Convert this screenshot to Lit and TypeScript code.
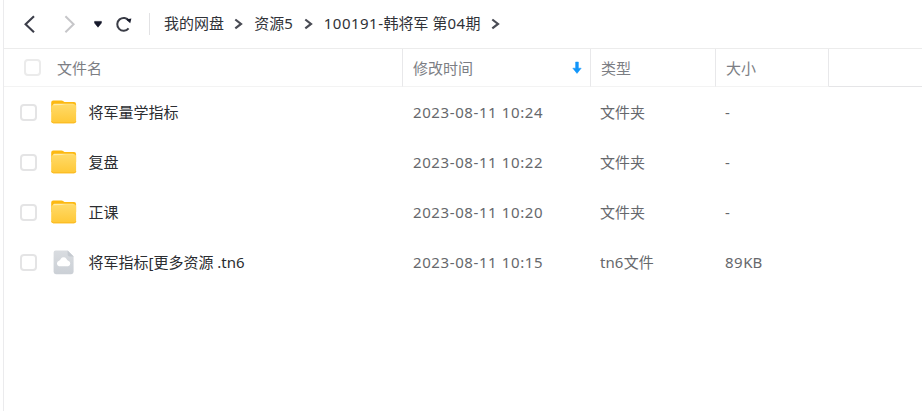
import { LitElement, html, css } from "lit";
import { customElement, property } from "lit/decorators.js";

interface Entry {
  name: string;
  date: string;
  type: string;
  size: string;
  icon: "folder" | "file";
}

const ENTRIES: Entry[] = [
  { name: "将军量学指标", date: "2023-08-11 10:24", type: "文件夹", size: "-", icon: "folder" },
  { name: "复盘", date: "2023-08-11 10:22", type: "文件夹", size: "-", icon: "folder" },
  { name: "正课", date: "2023-08-11 10:20", type: "文件夹", size: "-", icon: "folder" },
  { name: "将军指标[更多资源 .tn6", date: "2023-08-11 10:15", type: "tn6文件", size: "89KB", icon: "file" },
];

const CRUMBS = ["我的网盘", "资源5", "100191-韩将军 第04期"];

// Runs with digits get slightly wider tracking than the Chinese text.
const label = (text: string) =>
  text
    .split(/([0-9][0-9:\- ]*)/)
    .filter(Boolean)
    .map((part) => (/^[0-9]/.test(part) ? html`<span class="num">${part}</span>` : part));

const runStyles = css`
  .num { letter-spacing: 0.5px; }
`;

const folderIcon = html`<svg width="26" height="24" viewBox="0 0 26 24">
  <defs>
    <linearGradient id="front" x1="0" y1="0" x2="0" y2="1">
      <stop offset="0" stop-color="#ffda68" />
      <stop offset="1" stop-color="#ffc836" />
    </linearGradient>
  </defs>
  <path d="M0.2 2.6Q0.2 0.6 2.2 0.6H10.4Q11.6 0.6 12.4 1.3L13.5 2H23Q25.1 2 25.1 4.2V12H0.2Z" fill="#fcb912" />
  <path d="M1.8 5.4Q2 3.8 3.4 3.8H22Q23.5 3.8 23.6 5.4V9H1.8Z" fill="#ffecaa" />
  <path d="M0.2 7.2Q0.2 5.6 1.7 5.3L10.6 5.1Q11.8 5 13 4.6Q14 4.3 15 4.3H23Q25.1 4.3 25.1 6.2V21.2Q25.1 23.3 23 23.3H2.3Q0.2 23.3 0.2 21.2Z" fill="url(#front)" />
  <path d="M0.6 21.2Q1 22.8 2.4 22.8H23Q24.6 22.8 24.9 21.2" fill="none" stroke="#fbb81c" stroke-width="0.9" />
</svg>`;

const fileIcon = html`<svg width="22" height="25" viewBox="0 0 22 25">
  <defs>
    <linearGradient id="sheet" x1="0" y1="0" x2="0" y2="1">
      <stop offset="0" stop-color="#d9dce0" />
      <stop offset="1" stop-color="#cbd0d6" />
    </linearGradient>
  </defs>
  <path d="M2.6 0.5H14.6L20.6 6.5V21.8Q20.6 24.2 18.2 24.2H3Q0.6 24.2 0.6 21.8V2.7Q0.6 0.5 2.6 0.5Z" fill="url(#sheet)" />
  <path d="M14.6 0.5L20.6 6.5H16.6Q14.6 6.5 14.6 4.7Z" fill="#c5cad0" />
  <path d="M6 16.2A2.8 2.8 0 0 1 6 10.8Q7.2 10.2 7.8 8.8A3.4 3.4 0 0 1 13.4 8.8Q14 10.2 15.2 10.8A2.8 2.8 0 0 1 15.2 16.2Z" fill="#fff" />
</svg>`;

@customElement("nav-bar")
export class NavBar extends LitElement {
  static styles = [
    runStyles,
    css`
      :host { display: flex; align-items: center; height: 48px; border-bottom: 1px solid #ececec; color: #303238; }
      svg { display: block; flex: none; }
      .back { margin-left: 19px; }
      .next { margin-left: 27px; }
      .drop { margin-left: 17px; }
      .reload { margin-left: 12px; }
      .rule { width: 1px; height: 22px; margin: 0 14px 0 16px; background: #e2e2e4; }
      .crumb { white-space: pre; line-height: 22px; padding-bottom: 2px; }
      .sep { margin: 0 11px 0 10.3px; }
    `,
  ];

  render() {
    return html`
      <svg class="back" width="13" height="20" viewBox="0 0 13 20"><path d="M11 2.2L2.6 10.2L11 18.2" fill="none" stroke="#3b3d49" stroke-width="2.1" /></svg>
      <svg class="next" width="13" height="20" viewBox="0 0 13 20"><path d="M2.4 2.2L10.6 10.2L2.4 18.2" fill="none" stroke="#c6c6c9" stroke-width="2" /></svg>
      <svg class="drop" width="10" height="8" viewBox="0 0 10 8"><path d="M1.6 1.4H8.4V3L5 7.2L1.6 3Z" fill="#15182a" stroke="#15182a" stroke-width="0.6" stroke-linejoin="round" /></svg>
      <svg class="reload" width="18" height="18" viewBox="0 0 18 18">
        <path d="M13.6 13.4A6.4 6.4 0 1 1 14 5.8" fill="none" stroke="#3b3d47" stroke-width="2" />
        <path d="M11 4.6L16.4 3.6L15.2 8.2Z" fill="#15182a" />
      </svg>
      <div class="rule"></div>
      ${CRUMBS.map(
        (c) => html`<span class="crumb">${label(c)}</span>
          <svg class="sep" width="9" height="12" viewBox="0 0 9 12"><path d="M1.3 1.5L7 5.9L1.3 10.3" fill="none" stroke="#4a4c55" stroke-width="2.2" /></svg>`
      )}
    `;
  }
}

@customElement("file-row")
export class FileRow extends LitElement {
  @property({ attribute: false }) entry!: Entry;

  static styles = [
    runStyles,
    css`
      :host { display: grid; grid-template-columns: 399px 188px 125px 113px; align-items: center; height: 50px; white-space: pre; color: #66686c; }
      .name { display: flex; align-items: center; padding-left: 16px; color: #2b2d31; }
      .box { box-sizing: border-box; width: 17px; height: 17px; border: 2px solid #e4e4e5; border-radius: 4px; flex: none; }
      .icon { display: flex; justify-content: center; width: 26px; margin: 0 11.5px 0 14px; }
      .cell { padding-left: 10px; }
      .type, .size { padding-left: 9px; }
      .date .num { letter-spacing: 0.6px; }
    `,
  ];

  render() {
    const e = this.entry;
    return html`
      <div class="name">
        <span class="box"></span>
        <span class="icon">${e.icon === "folder" ? folderIcon : fileIcon}</span>
        <span>${label(e.name)}</span>
      </div>
      <div class="cell date">${label(e.date)}</div>
      <div class="cell type">${label(e.type)}</div>
      <div class="cell size">${label(e.size)}</div>
    `;
  }
}

@customElement("app-root")
export class AppRoot extends LitElement {
  static styles = css`
    :host {
      display: block;
      box-sizing: border-box;
      height: 411px;
      margin-left: 3px;
      border-left: 1px solid #ebebed;
      overflow: hidden;
      background: #fff;
      font: 15px/24px "Noto Sans", "Noto Sans CJK SC", sans-serif;
    }
    .head { display: grid; grid-template-columns: 399px 188px 125px 113px 1fr; height: 38px; color: #7c7e84; }
    .head > div { display: flex; align-items: center; box-sizing: border-box; padding-left: 10px; border-right: 1px solid #e8e8ea; border-bottom: 1px solid #f3f3f3; }
    .head .first { padding-left: 20px; }
    .head .rest { border-right: 0; border-bottom-color: #e5e5e7; }
    .box { box-sizing: border-box; width: 17px; height: 17px; margin-right: 16px; border: 2px solid #ebebeb; border-radius: 4px; }
    .arrow { margin: 0 8px 0 auto; }
  `;

  render() {
    return html`
      <nav-bar></nav-bar>
      <div class="head">
        <div class="first"><span class="box"></span>文件名</div>
        <div>修改时间
          <svg class="arrow" width="10" height="14" viewBox="0 0 10 14"><path d="M3.6 1H6.4V7.2H9.2L5 12.4L0.8 7.2H3.6Z" fill="#1296fa" stroke="#1296fa" stroke-width="0.5" stroke-linejoin="round" /></svg>
        </div>
        <div>类型</div>
        <div>大小</div>
        <div class="rest"></div>
      </div>
      ${ENTRIES.map((e) => html`<file-row .entry=${e}></file-row>`)}
    `;
  }
}
